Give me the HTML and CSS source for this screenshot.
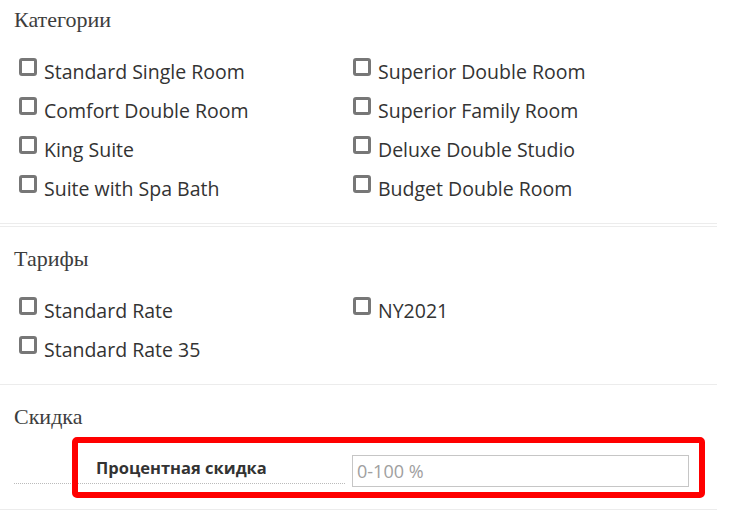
FILE: index.html
```html
<!DOCTYPE html>
<html lang="ru">
<head>
<meta charset="utf-8">
<title>Форма</title>
<link rel="stylesheet" href="styles.css">
</head>
<body>
<div class="page">
  <section class="section first">
    <h2 class="heading">Категории</h2>
    <div class="options">
      <label class="option"><span class="box"></span><span>Standard Single Room</span></label>
      <label class="option"><span class="box"></span><span>Superior Double Room</span></label>
      <label class="option"><span class="box"></span><span>Comfort Double Room</span></label>
      <label class="option"><span class="box"></span><span>Superior Family Room</span></label>
      <label class="option"><span class="box"></span><span>King Suite</span></label>
      <label class="option"><span class="box"></span><span>Deluxe Double Studio</span></label>
      <label class="option"><span class="box"></span><span>Suite with Spa Bath</span></label>
      <label class="option"><span class="box"></span><span>Budget Double Room</span></label>
    </div>
  </section>
  <div class="second-line"></div>
  <section class="section">
    <h2 class="heading">Тарифы</h2>
    <div class="options">
      <label class="option"><span class="box"></span><span>Standard Rate</span></label>
      <label class="option"><span class="box"></span><span>NY2021</span></label>
      <label class="option"><span class="box"></span><span>Standard Rate 35</span></label>
    </div>
  </section>
  <section class="section discount">
    <h2 class="heading">Скидка</h2>
    <div class="field">
      <div class="field-label">Процентная скидка</div>
      <input class="field-input" type="text" placeholder="0-100 %">
      <div class="highlight"></div>
    </div>
  </section>
</div>
</body>
</html>
```

FILE: styles.css
```css
html, body {
  margin: 0;
  padding: 0;
  background: #fff;
}
body {
  font-family: "Open Sans", "Liberation Sans", sans-serif;
  color: #333;
}
.page {
  width: 717px;
}
.section {
  padding: 20px 0 15px 14px;
  border-bottom: 1px solid #ececec;
}
.section.first {
  padding-top: 8px;
}
.second-line {
  height: 0;
  margin-top: 2px;
  border-top: 1px solid #ececec;
}
.heading {
  margin: 0;
  font-family: "Liberation Serif", "DejaVu Serif", serif;
  font-weight: normal;
  font-size: 22px;
  line-height: 24px;
  color: #3d3d3d;
}
.options {
  margin-top: 20px;
  display: grid;
  grid-template-columns: 334px 334px;
}
.option {
  display: flex;
  align-items: flex-start;
  height: 39px;
  line-height: 39px;
  font-size: 19.5px;
  padding-left: 5px;
  color: #333;
}
.box {
  display: block;
  box-sizing: border-box;
  width: 18px;
  height: 18px;
  flex: none;
  margin-top: 6px;
  margin-right: 7px;
  border: 3px solid #777;
  border-radius: 3px;
  background: #fff;
}
.section.discount {
  padding-top: 20px;
  padding-bottom: 22px;
}
.field {
  position: relative;
  margin-top: 26px;
  display: grid;
  grid-template-columns: 331px 337px;
  column-gap: 7px;
  align-items: start;
}
.field-label {
  height: 28px;
  border-bottom: 1px dotted #bbb;
  padding-left: 82px;
  box-sizing: content-box;
  font-weight: bold;
  font-size: 16.5px;
  line-height: 26px;
  color: #333;
}
.field-input {
  box-sizing: border-box;
  width: 337px;
  height: 32px;
  margin: 0;
  border: 1px solid #c6c6c6;
  padding: 0 4px;
  font-family: "Open Sans", "Liberation Sans", sans-serif;
  font-size: 18px;
  color: #333;
  outline: none;
}
.field-input::placeholder {
  color: #a0a0a0;
}
.highlight {
  position: absolute;
  left: 58px;
  top: -18px;
  width: 633px;
  height: 61px;
  box-sizing: border-box;
  border: 6px solid #ff0000;
  border-radius: 5px;
  pointer-events: none;
}
```
